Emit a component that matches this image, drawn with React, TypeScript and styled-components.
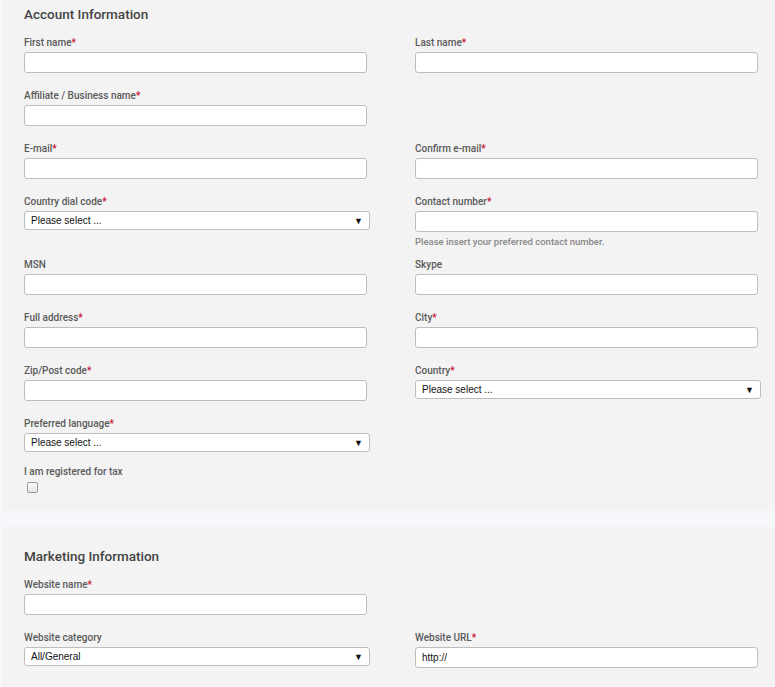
import React from 'react';
import styled, { createGlobalStyle } from 'styled-components';

const GlobalStyle = createGlobalStyle`
  html, body {
    margin: 0;
    padding: 0;
    background: #f6f8fc;
  }
  * { box-sizing: border-box; }
`;

const Page = styled.div`
  width: 775px;
  display: flex;
  flex-direction: column;
  gap: 16px;
  font-family: Roboto, "Liberation Sans", sans-serif;
`;

const Panel = styled.section<{ $top: number; $bottom: number }>`
  background: #f3f3f3;
  border-left: 1px solid #fafafa;
  padding: ${p => p.$top}px 15px ${p => p.$bottom}px 23px;
`;

const Heading = styled.h2`
  margin: 0 0 13px;
  font-size: 13.5px;
  line-height: 18px;
  font-weight: 500;
  color: #444;
`;

const Row = styled.div<{ $space?: number }>`
  display: grid;
  grid-template-columns: 345px 345px;
  column-gap: 46px;
  margin-bottom: ${p => p.$space ?? 16}px;
  align-items: start;

  &:last-child {
    margin-bottom: 0;
  }
`;

const Field = styled.div`
  display: flex;
  flex-direction: column;
  align-items: flex-start;
`;

const Label = styled.label`
  font-size: 10px;
  line-height: 14px;
  font-weight: 500;
  color: #5a5a5a;
  margin-bottom: 2px;
`;

const Req = styled.span`
  color: #c8102e;
`;

const TextInput = styled.input`
  width: 343px;
  height: 21px;
  border: 1px solid #bdbdbd;
  border-radius: 3px;
  background: #fff;
  padding: 0 6px;
  font-family: "Liberation Sans", Arial, sans-serif;
  font-size: 10px;
  color: #111;
  outline: none;
`;

const SelectBox = styled.div`
  width: 346px;
  height: 19px;
  border: 1px solid #bdbdbd;
  border-radius: 3px;
  background: #fff;
  display: flex;
  align-items: center;
  justify-content: space-between;
  padding: 0 6px 0 6px;
  font-family: "Liberation Sans", Arial, sans-serif;
  font-size: 10px;
  color: #111;
`;

const Arrow = styled.span`
  font-size: 9px;
  color: #111;
`;

const Help = styled.div`
  font-size: 9.5px;
  line-height: 12px;
  font-weight: 500;
  color: #888;
  margin-top: 4px;
  margin-bottom: -6px;
`;

const Check = styled.span`
  display: block;
  width: 11px;
  height: 11px;
  margin: 1px 0 0 3px;
  border: 1px solid #999;
  border-radius: 2px;
  background: linear-gradient(#fdfdfd, #e4e4e4);
`;

function Text({ label, req, help, value }: { label: string; req?: boolean; help?: string; value?: string }) {
  return (
    <Field>
      <Label>
        {label}
        {req && <Req>*</Req>}
      </Label>
      <TextInput defaultValue={value} />
      {help && <Help>{help}</Help>}
    </Field>
  );
}

function Select({ label, req, value }: { label: string; req?: boolean; value: string }) {
  return (
    <Field>
      <Label>
        {label}
        {req && <Req>*</Req>}
      </Label>
      <SelectBox>
        <span>{value}</span>
        <Arrow>▼</Arrow>
      </SelectBox>
    </Field>
  );
}

export default function App() {
  return (
    <Page>
      <GlobalStyle />
      <Panel $top={5} $bottom={18}>
        <Heading>Account Information</Heading>
        <Row>
          <Text label="First name" req />
          <Text label="Last name" req />
        </Row>
        <Row>
          <Text label="Affiliate / Business name" req />
        </Row>
        <Row>
          <Text label="E-mail" req />
          <Text label="Confirm e-mail" req />
        </Row>
        <Row>
          <Select label="Country dial code" req value="Please select ..." />
          <Text label="Contact number" req help="Please insert your preferred contact number." />
        </Row>
        <Row>
          <Text label="MSN" />
          <Text label="Skype" />
        </Row>
        <Row>
          <Text label="Full address" req />
          <Text label="City" req />
        </Row>
        <Row>
          <Text label="Zip/Post code" req />
          <Select label="Country" req value="Please select ..." />
        </Row>
        <Row $space={13}>
          <Select label="Preferred language" req value="Please select ..." />
        </Row>
        <Row>
          <Field>
            <Label>I am registered for tax</Label>
            <Check />
          </Field>
        </Row>
      </Panel>
      <Panel $top={20} $bottom={18}>
        <Heading>Marketing Information</Heading>
        <Row>
          <Text label="Website name" req />
        </Row>
        <Row>
          <Select label="Website category" value="All/General" />
          <Text label="Website URL" req value="http://" />
        </Row>
      </Panel>
    </Page>
  );
}
